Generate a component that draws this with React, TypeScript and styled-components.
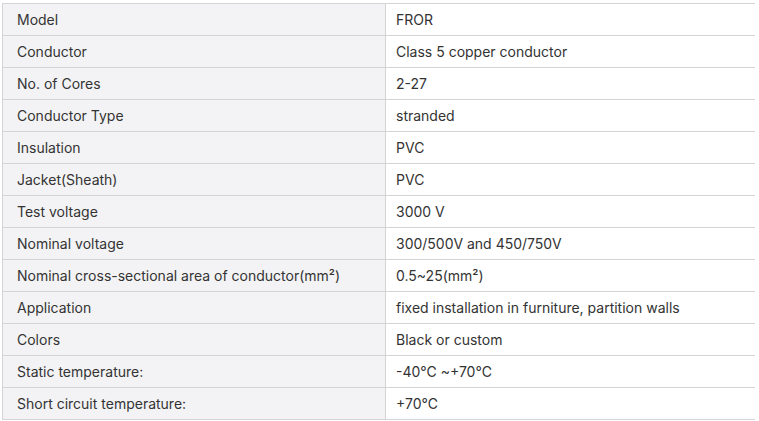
import React from "react";
import styled, { createGlobalStyle } from "styled-components";

const Global = createGlobalStyle`
  html, body { margin: 0; padding: 0; background: #ffffff; }
  body { font-family: Inter, "Noto Sans", sans-serif; }
`;

const Wrap = styled.div`
  padding: 3px 4px 0 2px;
`;

const Table = styled.table`
  width: 753px;
  border-collapse: collapse;
  table-layout: fixed;
  font-size: 14px;
  color: #333333;
`;

const Row = styled.tr`
  height: 32px;
`;

const Label = styled.td`
  width: 383px;
  box-sizing: border-box;
  background: #f3f3f5;
  border: 1px solid #d4d4d6;
  padding: 0 0 0 14px;
  height: 31px;
  vertical-align: middle;
`;

const Value = styled.td`
  background: #ffffff;
  border-top: 1px solid #d4d4d6;
  border-bottom: 1px solid #d4d4d6;
  border-left: 1px solid #d4d4d6;
  padding: 0 0 0 10px;
  height: 31px;
  vertical-align: middle;
`;

const rows: [string, React.ReactNode][] = [
  ["Model", "FROR"],
  ["Conductor", "Class 5 copper conductor"],
  ["No. of Cores", "2-27"],
  ["Conductor Type", "stranded"],
  ["Insulation", "PVC"],
  ["Jacket(Sheath)", "PVC"],
  ["Test voltage", "3000 V"],
  ["Nominal voltage", "300/500V and 450/750V"],
  ["Nominal cross-sectional area of conductor(mm²)", "0.5~25(mm²)"],
  ["Application", "fixed installation in furniture, partition walls"],
  ["Colors", "Black or custom"],
  ["Static temperature:", "-40℃ ~+70℃"],
  ["Short circuit temperature:", "+70℃"],
];

export default function App() {
  return (
    <>
      <Global />
      <Wrap>
        <Table>
          <tbody>
            {rows.map(([k, v]) => (
              <Row key={k}>
                <Label>{k}</Label>
                <Value>{v}</Value>
              </Row>
            ))}
          </tbody>
        </Table>
      </Wrap>
    </>
  );
}
